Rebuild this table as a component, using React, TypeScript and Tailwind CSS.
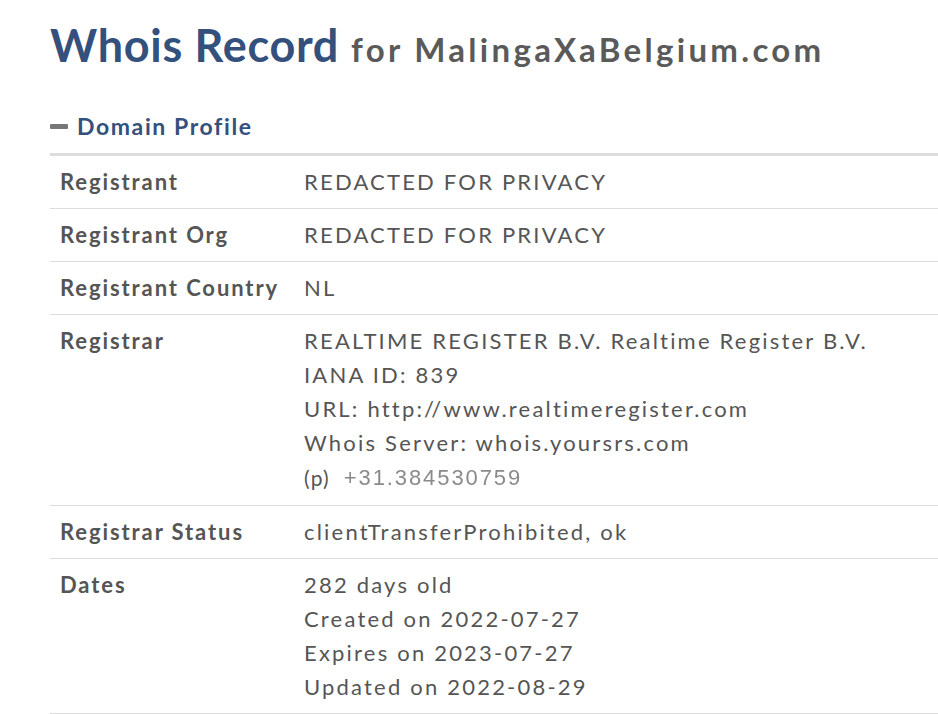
const rows: { label: string; lines: React.ReactNode[] }[] = [
  { label: 'Registrant', lines: ['REDACTED FOR PRIVACY'] },
  { label: 'Registrant Org', lines: ['REDACTED FOR PRIVACY'] },
  { label: 'Registrant Country', lines: ['NL'] },
  {
    label: 'Registrar',
    lines: [
      'REALTIME REGISTER B.V. Realtime Register B.V.',
      'IANA ID: 839',
      'URL: http://www.realtimeregister.com',
      'Whois Server: whois.yoursrs.com',
      <span className="flex h-[36px] items-center">
        <span className="text-[21px] tracking-[1.2px]">(p)</span>
        <span className="ml-[14px] font-['Liberation_Sans',sans-serif] text-[22px] tracking-[1.9px] text-[#8a8a8a] blur-[0.4px]">
          +31.384530759
        </span>
      </span>,
    ],
  },
  { label: 'Registrar Status', lines: ['clientTransferProhibited, ok'] },
  {
    label: 'Dates',
    lines: ['282 days old', 'Created on 2022-07-27', 'Expires on 2023-07-27', 'Updated on 2022-08-29'],
  },
];

export default function App() {
  return (
    <div className="min-h-screen bg-white pl-[50px] font-['Lato',sans-serif] text-[#555]">
      <h1 className="pt-[19px] leading-[52px]">
        <span className="text-[45px] font-bold tracking-[0.7px] text-[#34507c]">Whois Record</span>
        <span className="ml-[12px] text-[33px] font-bold tracking-[3.3px] text-[#5a5a5a]">for MalingaXaBelgium.com</span>
      </h1>
      <div className="mt-[27px] flex items-center">
        <span className="mr-[9px] h-[5px] w-[18px] rounded-[1px] bg-[#777]" />
        <span className="text-[23px] font-bold tracking-[1.6px] text-[#34507c]">Domain Profile</span>
      </div>
      <div className="mt-[9px] border-t-[3px] border-[#ddd]">
        {rows.map((row) => (
          <div key={row.label} className="flex border-b border-[#ddd] py-[9px] pl-[10px] text-[22px] leading-[34px]">
            <div className="w-[244px] shrink-0 font-bold tracking-[1.9px]">{row.label}</div>
            <div className="tracking-[2.2px]">
              {row.lines.map((line, i) => (
                <div key={i}>{line}</div>
              ))}
            </div>
          </div>
        ))}
      </div>
    </div>
  );
}
